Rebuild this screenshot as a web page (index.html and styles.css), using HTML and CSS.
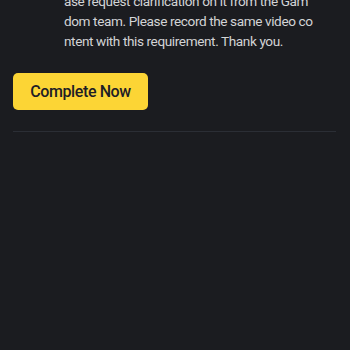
FILE: index.html
```html
<!DOCTYPE html>
<html>
<head>
<meta charset="utf-8">
<link rel="stylesheet" href="styles.css">
</head>
<body>
<div class="page">
  <div class="note">
    <span class="line">ase request clarification on it from the Gam</span>
    <span class="line">dom team. Please record the same video co</span>
    <span class="line">ntent with this requirement. Thank you.</span>
  </div>
  <div class="actions">
    <button class="btn">Complete Now</button>
  </div>
  <div class="divider"></div>
</div>
</body>
</html>
```

FILE: styles.css
```css
html, body {
  margin: 0;
  padding: 0;
  background: #1b1c20;
  height: 100%;
}
.page {
  font-family: Roboto, "Liberation Sans", sans-serif;
  padding: 0 14px 0 13px;
}
.note {
  margin-top: -9px;
  padding-left: 51px;
  color: #d3d4d6;
  font-size: 13.6px;
  letter-spacing: -0.4px;
  line-height: 20px;
}
.line {
  display: block;
  white-space: nowrap;
}
.actions {
  margin-top: 22px;
}
.btn {
  background: #fcd535;
  color: #1e2026;
  border: none;
  border-radius: 5px;
  font-family: inherit;
  font-size: 16px;
  font-weight: 500;
  letter-spacing: -0.4px;
  height: 37px;
  width: 135px;
  padding: 0;
}
.divider {
  margin-top: 21px;
  height: 1px;
  background: #2b2e35;
}
```
